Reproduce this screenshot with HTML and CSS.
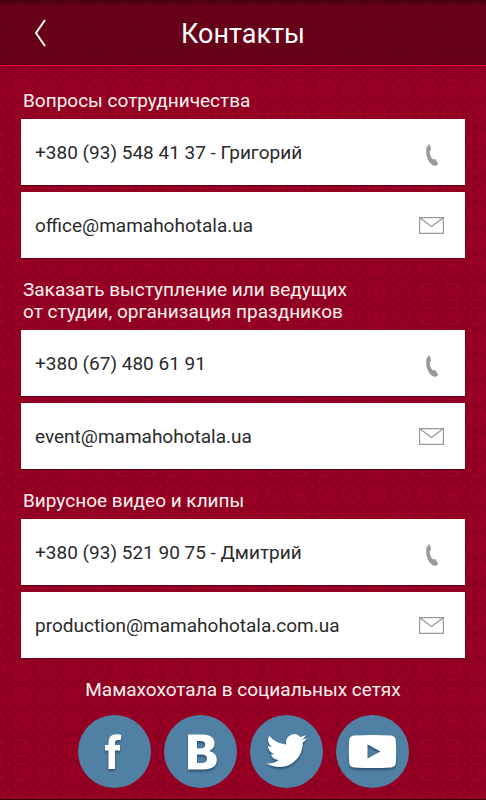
FILE: index.html
```html
<!DOCTYPE html>
<html lang="ru">
<head>
  <meta charset="UTF-8" />
  <meta name="viewport" content="width=device-width, initial-scale=1.0"/>
  <title>Контакты</title>
  <link rel="stylesheet" href="styles.css">
</head>
<body>
  <svg class="sprite" aria-hidden="true">
    <symbol id="phone" viewBox="0 0 12 22">
      <path d="M3.8 0.2 L5 5.4 C4.8 6.4 4.2 6.8 3.6 7.2 C3.6 10.4 5 13.6 7 15.6 C7.8 15 8.6 14.8 9.4 15.2 L12 19.4 C11.6 20.8 10.4 21.8 8.8 21.8 C3.6 20.6 0 14 0.2 6.4 C0.3 3 1.6 0.6 3.8 0.2 Z"/>
    </symbol>
    <symbol id="mail" viewBox="0 0 25 17">
      <path d="M0.5 0.5 H24.5 V16.5 H0.5 Z M0.5 0.5 L12.5 9.5 L24.5 0.5" fill="none" stroke="currentColor" stroke-width="1.3"/>
    </symbol>
  </svg>

  <header class="header">
    <button class="back" type="button" aria-label="Назад" onclick="history.back()">
      <svg width="12" height="28" viewBox="0 0 12 28"><path d="M11 1 L2 14 L11 27"/></svg>
    </button>
    <h1>Контакты</h1>
  </header>

  <main class="content">
    <section class="group">
      <h2>Вопросы сотрудничества</h2>
      <a class="card" href="tel:+380935484137">
        <span>+380 (93) 548 41 37 - Григорий</span>
        <svg class="phone"><use href="#phone"/></svg>
      </a>
      <a class="card" href="mailto:office@mamahohotala.ua">
        <span>office@mamahohotala.ua</span>
        <svg class="mail"><use href="#mail"/></svg>
      </a>
    </section>

    <section class="group">
      <h2>Заказать выступление или ведущих<br>от студии, организация праздников</h2>
      <a class="card" href="tel:+380674806191">
        <span>+380 (67) 480 61 91</span>
        <svg class="phone"><use href="#phone"/></svg>
      </a>
      <a class="card" href="mailto:event@mamahohotala.ua">
        <span>event@mamahohotala.ua</span>
        <svg class="mail"><use href="#mail"/></svg>
      </a>
    </section>

    <section class="group">
      <h2>Вирусное видео и клипы</h2>
      <a class="card" href="tel:+380935219075">
        <span>+380 (93) 521 90 75 - Дмитрий</span>
        <svg class="phone"><use href="#phone"/></svg>
      </a>
      <a class="card" href="mailto:production@mamahohotala.com.ua">
        <span>production@mamahohotala.com.ua</span>
        <svg class="mail"><use href="#mail"/></svg>
      </a>
    </section>

    <section class="social">
      <h2>Мамахохотала в социальных сетях</h2>
      <div class="social-links">
        <a href="#facebook" aria-label="Facebook">
          <svg viewBox="0 0 73 73"><path d="M30.5 54 V35.5 H27 V30 H30.5 V28 C30.5 22 33.5 19.3 38.5 19.3 C40.5 19.3 42 19.5 43.3 20 L42.6 25.3 C38.5 24.6 37 25.5 37 28.4 V30 H42 V35.5 H37 V54 Z"/></svg>
        </a>
        <a href="#vk" aria-label="ВКонтакте">
          <svg viewBox="0 0 73 73"><path fill-rule="evenodd" d="M24 19.5 H38.5 C47 19.5 50.5 23 50.5 28.3 C50.5 32.2 48.5 34.8 45 36 C50 37 52.8 40.2 52.8 44.8 C52.8 51.2 48 54.5 39.5 54.5 H24 Z M33 26 V33.5 H36.5 C39.8 33.5 41.2 32.2 41.2 29.7 C41.2 27.2 39.8 26 36.5 26 Z M33 39.5 V48 H37.5 C41.2 48 43 46.6 43 43.7 C43 40.9 41.2 39.5 37.5 39.5 Z"/></svg>
        </a>
        <a href="#twitter" aria-label="Twitter">
          <svg viewBox="0 0 73 73"><path transform="translate(16.5 15.5) scale(1.68)" d="M23.95 4.57 a10 10 0 0 1-2.82.77 4.96 4.96 0 0 0 2.16-2.72 c-.95.55-2 .95-3.13 1.18 a4.92 4.92 0 0 0-8.38 4.48 C7.69 8.1 4.07 6.13 1.64 3.16 a4.92 4.92 0 0 0 1.52 6.57 a4.9 4.9 0 0 1-2.23-.61 v.06 c0 2.38 1.7 4.37 3.95 4.83 a5 5 0 0 1-2.21.08 a4.94 4.94 0 0 0 4.6 3.42 A9.87 9.87 0 0 1 0 19.54 a14 14 0 0 0 7.55 2.21 c9.05 0 14-7.5 14-13.98 0-.21 0-.42-.02-.63 a10 10 0 0 0 2.42-2.57 Z"/></svg>
        </a>
        <a href="#youtube" aria-label="YouTube">
          <svg viewBox="0 0 73 73"><path fill-rule="evenodd" d="M18 20.5 Q36.5 19.5 55 20.5 Q59.5 20.8 59.8 25.5 Q60.6 36.5 59.8 47.5 Q59.5 52.2 55 52.5 Q36.5 53.5 18 52.5 Q13.5 52.2 13.2 47.5 Q12.4 36.5 13.2 25.5 Q13.5 20.8 18 20.5 Z M31.5 29.5 V43.5 L44.5 36.5 Z"/></svg>
        </a>
      </div>
    </section>
  </main>
</body>
</html>
```
FILE: styles.css
```css
* {
  box-sizing: border-box;
}
body {
  font-family: Roboto, "Noto Sans", sans-serif;
  margin: 0;
  min-height: 100vh;
  border-bottom: 1px solid #30000b;
  background-color: #980024;
  background-image: url("data:image/svg+xml,%3Csvg xmlns='http://www.w3.org/2000/svg' width='76' height='76'%3E%3Cdefs%3E%3Cpattern id='p' width='25.33' height='25.33' patternUnits='userSpaceOnUse'%3E%3Cg fill='none' stroke='%23500014' stroke-opacity='.17'%3E%3Ccircle cx='12.67' cy='12.67' r='5' stroke-width='2'/%3E%3Ccircle cx='12.67' cy='12.67' r='12' stroke-width='3' stroke-dasharray='5 1.3'/%3E%3Cpath d='M0 0L4 4M25.33 0L21.33 4M0 25.33L4 21.33M25.33 25.33L21.33 21.33' stroke-width='3'/%3E%3C/g%3E%3C/pattern%3E%3C/defs%3E%3Crect width='76' height='76' fill='url(%23p)'/%3E%3C/svg%3E");
  background-position: 9px 0;
}
.sprite {
  display: none;
}
.header {
  display: grid;
  grid-template-columns: 80px 1fr 80px;
  align-items: center;
  height: 66px;
  border-bottom: 1px solid #e0003a;
  background: linear-gradient(rgba(20, 0, 5, 0.6), rgba(35, 0, 8, 0.4) 6px, rgba(35, 0, 8, 0.4));
  color: #fff;
}
.back {
  justify-self: stretch;
  height: 65px;
  padding: 0;
  border: 0;
  background: none;
  cursor: pointer;
}
.back svg {
  display: block;
  margin: 0 auto;
  fill: none;
  stroke: #fff;
  stroke-width: 2;
}
h1 {
  margin: 0;
  padding-top: 3px;
  font-size: 27px;
  line-height: 32px;
  font-weight: 400;
  text-align: center;
}
.content {
  padding: 24px 21px 11px;
}
.group {
  display: flex;
  flex-direction: column;
  gap: 7px;
  margin-bottom: 21px;
}
h2 {
  margin: 0 2px;
  color: #fff3ee;
  font-size: 19px;
  line-height: 22px;
  font-weight: 400;
}
.card {
  display: flex;
  align-items: center;
  justify-content: space-between;
  height: 66px;
  padding: 1px 21px 0 14px;
  background: #fff;
  color: #2a2a2a;
  font-size: 19px;
  line-height: 24px;
  text-decoration: none;
  box-shadow: 0 1px 1px rgba(60, 0, 14, 0.5);
}
.card svg {
  flex: none;
  color: #999;
  fill: #999;
}
.phone {
  width: 12px;
  height: 22px;
  margin: 4px 6px 0;
}
.mail {
  width: 25px;
  height: 17px;
}
.social {
  text-align: center;
}
.social-links {
  display: flex;
  justify-content: center;
  gap: 13px;
  margin-top: 14px;
}
.social-links a {
  width: 73px;
  height: 73px;
  border-radius: 50%;
  background: #5180a5;
}
.social-links svg {
  display: block;
  fill: #fff;
  filter: drop-shadow(0 2px 1px rgba(20, 50, 80, 0.6));
}
```
